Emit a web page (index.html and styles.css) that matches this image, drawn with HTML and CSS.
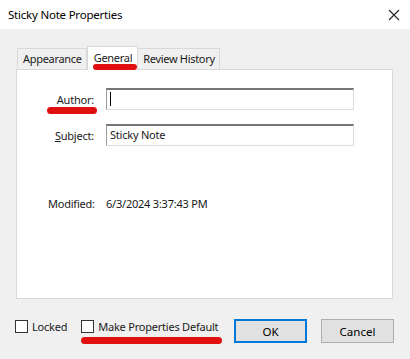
FILE: index.html
```html
<!DOCTYPE html>
<html lang="en">
<head>
    <meta charset="UTF-8">
    <title>Sticky Note Properties</title>
    <link rel="stylesheet" href="styles.css">
</head>
<body>
    <div class="dialog">
        <div class="titlebar">
            <span class="title">Sticky Note Properties</span>
            <svg class="close" width="12" height="12" viewBox="0 0 12 12">
                <path d="M1 1 L11 11 M11 1 L1 11" stroke="#222" stroke-width="1.1" fill="none"/>
            </svg>
        </div>
        <div class="content">
            <div class="tabs">
                <div class="tab">Appearance</div>
                <div class="tab active">General<span class="mark mark-tab"></span></div>
                <div class="tab">Review History</div>
            </div>
            <div class="panel">
                <div class="row">
                    <label class="label"><span class="marked">Author:<span class="mark mark-author"></span></span></label>
                    <div class="field"><span class="caret"></span></div>
                </div>
                <div class="row">
                    <label class="label"><u>S</u>ubject:</label>
                    <div class="field">Sticky Note</div>
                </div>
                <div class="modified">
                    <span class="mod-label">Modified:</span>
                    <span>6/3/2024 3:37:43 PM</span>
                </div>
            </div>
            <div class="footer">
                <label class="check"><span class="box"></span>Locked</label>
                <label class="check check-default"><span class="box"></span>Make Properties Default<span class="mark mark-default"></span></label>
                <button class="btn primary">OK</button>
                <button class="btn">Cancel</button>
            </div>
        </div>
    </div>
</body>
</html>
```

FILE: styles.css
```css
* {
    box-sizing: border-box;
}
body {
    margin: 0;
    font-family: "Noto Sans", "Open Sans", sans-serif;
    font-size: 11px;
    letter-spacing: -0.22px;
    color: #1a1a1a;
    background: #f0f0f0;
}
.dialog {
    width: 410px;
    height: 359px;
    background: #f0f0f0;
}
.titlebar {
    height: 29px;
    background: #fff;
    display: flex;
    align-items: center;
    justify-content: space-between;
    padding: 0 10px 0 8px;
}
.title {
    font-size: 11.5px;
    color: #000;
}
.content {
    padding: 17px 17px 0 16px;
}
.tabs {
    display: flex;
    align-items: flex-end;
    padding-left: 1px;
    height: 23px;
}
.tab {
    position: relative;
    height: 21px;
    padding: 0 4px 0 5px;
    border: 1px solid #d9d9d9;
    border-bottom: none;
    background: #f0f0f0;
    line-height: 20px;
    letter-spacing: -0.3px;
    white-space: nowrap;
}
.tab + .tab {
    border-left: none;
}
.tab.active {
    height: 24px;
    background: #fff;
    border-left: 1px solid #d9d9d9;
    margin-bottom: -1px;
    padding: 0 5px 0 6px;
    line-height: 21px;
    z-index: 1;
}
.tab.active + .tab {
    border-left: none;
}
.panel {
    height: 230px;
    background: #fff;
    border: 1px solid #d9d9d9;
    padding-top: 18px;
}
.row {
    display: flex;
    align-items: center;
    margin-bottom: 14px;
}
.label {
    width: 77px;
    text-align: right;
    margin-right: 12px;
}
.marked {
    position: relative;
}
.field {
    width: 248px;
    height: 22px;
    border: 1px solid #dcdcdc;
    border-top: 2px solid #767676;
    border-left: 1px solid #9a9a9a;
    padding: 0 3px;
    line-height: 18px;
    background: #fff;
}
.caret {
    display: inline-block;
    width: 1px;
    height: 14px;
    margin-top: 2px;
    background: #000;
    vertical-align: top;
}
.modified {
    display: flex;
    margin-top: 50px;
    padding-left: 31px;
}
.mod-label {
    width: 58px;
}
.footer {
    display: flex;
    align-items: flex-start;
    margin: 20px -1px 0 -1px;
}
.check {
    position: relative;
    display: flex;
    align-items: center;
    margin-top: 1px;
    line-height: 13px;
    white-space: nowrap;
}
.box {
    width: 13px;
    height: 13px;
    border: 1px solid #333;
    background: #fff;
    margin-right: 4px;
}
.check-default {
    margin-left: 14px;
}
.btn {
    width: 73px;
    height: 24px;
    font-family: inherit;
    font-size: 11.5px;
    color: #000;
    background: #e1e1e1;
    border: 1px solid #adadad;
    padding: 0;
}
.btn.primary {
    margin-left: auto;
    border: 2px solid #0078d7;
}
.btn + .btn {
    margin-left: 14px;
}
.mark {
    position: absolute;
    background: #e01010;
    border-radius: 4px;
}
.mark-tab {
    left: 5px;
    right: 0;
    bottom: 0;
    height: 6px;
}
.mark-author {
    left: -10px;
    width: 50px;
    bottom: -7px;
    height: 7px;
}
.mark-default {
    left: 0;
    width: 141px;
    bottom: -11px;
    height: 7px;
}
```
